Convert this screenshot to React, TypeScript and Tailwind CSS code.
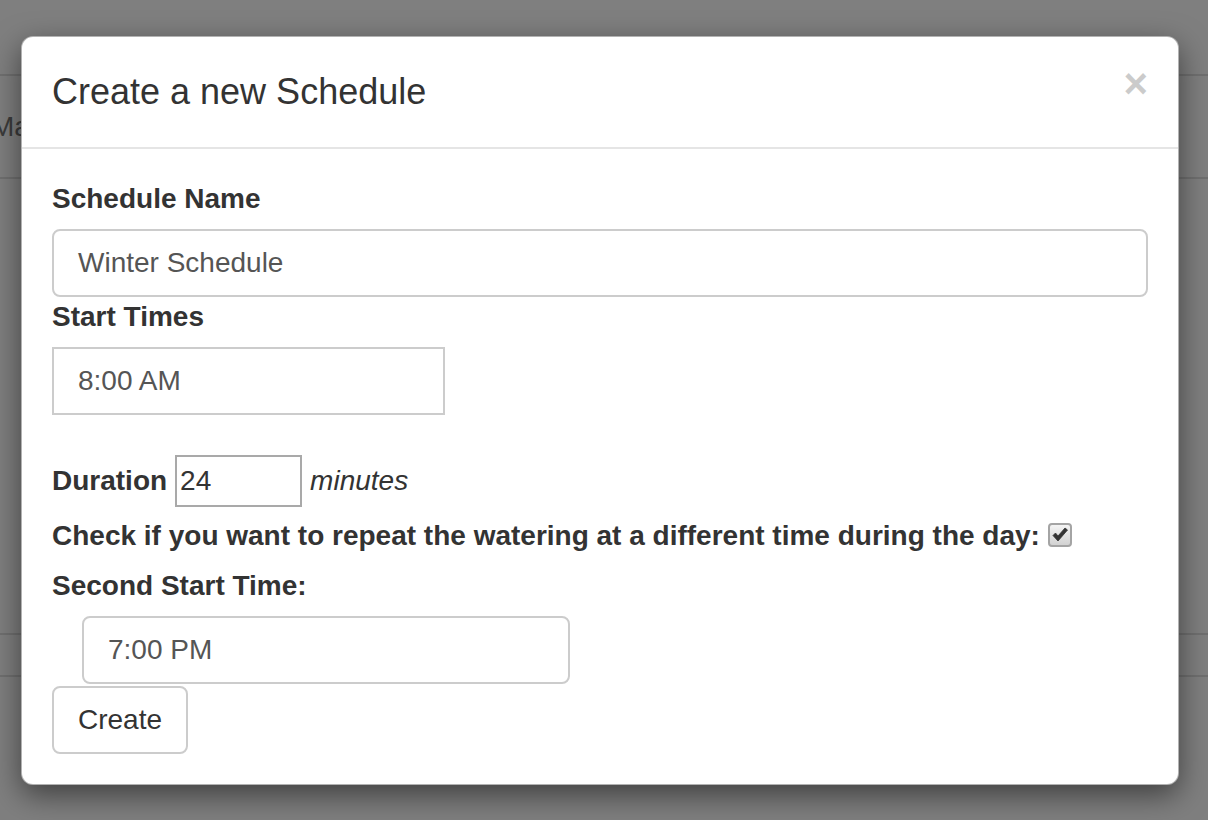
import React from "react";

export default function App() {
  return (
    <div className="relative h-[820px] w-full overflow-hidden bg-white font-['Liberation_Sans',Arial,sans-serif] text-[#333]">
      {/* page behind the backdrop */}
      <div className="flex flex-col">
        <div className="h-[76px] border-b-2 border-[#e0e0e0]" />
        <div className="flex h-[103px] items-center border-b-2 border-[#e0e0e0]">
          <span className="ml-[-9px] whitespace-nowrap text-[28px] leading-[40px] text-[#777]">Manage</span>
        </div>
        <div className="h-[456px] border-b-2 border-[#e0e0e0]" />
        <div className="h-[42px] border-b-2 border-[#e0e0e0]" />
      </div>

      {/* backdrop */}
      <div className="absolute inset-0 bg-black/50" />

      {/* modal */}
      <div className="absolute left-[21px] top-[36px] w-[1158px] rounded-[12px] border border-black/30 bg-white shadow-[0_10px_30px_rgba(0,0,0,0.5)]">
        <div className="flex items-start justify-between border-b-2 border-[#e5e5e5] px-[30px] pt-[30px] pb-[30px]">
          <h4 className="m-0 text-[36px] font-normal leading-[50px] text-[#333]">Create a new Schedule</h4>
          <button className="mt-[-4px] mr-[0px] text-[42px] font-bold leading-none text-black opacity-20">×</button>
        </div>
        <div className="flex flex-col items-start p-[30px] text-[28px] leading-[40px]">
          <label className="mb-[10px] font-bold">Schedule Name</label>
          <div className="flex h-[68px] w-full items-center rounded-[8px] border-2 border-[#ccc] px-[24px] text-[#555]">
            Winter Schedule
          </div>
          <label className="mb-[10px] font-bold">Start Times</label>
          <div className="flex h-[68px] w-[393px] items-center border-2 border-[#ccc] px-[24px] text-[#555]">
            8:00 AM
          </div>
          <div className="mt-[40px] flex h-[52px] items-center">
            <label className="font-bold">Duration</label>
            <div className="ml-[8px] flex h-[52px] w-[127px] items-center border-2 border-[#a9a9a9] pl-[3px] text-[#333]">
              24
            </div>
            <span className="ml-[8px] italic">minutes</span>
          </div>
          <div className="mt-[9px] mb-[10px] flex items-center">
            <label className="font-bold">
              Check if you want to repeat the watering at a different time during the day:
            </label>
            <div className="ml-[8px] mt-[-3px] flex h-[24px] w-[24px] items-center justify-center rounded-[4px] border-2 border-[#a4a4a4] bg-gradient-to-b from-[#f4f4f4] to-[#d2d2d2]">
              <svg width="16" height="15" viewBox="0 0 16 15">
                <path d="M1 8.5 L3.5 6 L6 9 L13 1 L15.5 3 L6 14 Z" fill="#333" stroke="#333" strokeWidth="0.8" strokeLinejoin="round" />
              </svg>
            </div>
          </div>
          <label className="mb-[10px] font-bold">Second Start Time:</label>
          <div className="ml-[30px] flex h-[68px] w-[488px] items-center rounded-[8px] border-2 border-[#ccc] px-[24px] text-[#555]">
            7:00 PM
          </div>
          <button className="mt-[2px] flex h-[68px] items-center rounded-[8px] border-2 border-[#ccc] bg-white px-[24px] text-[28px] text-[#333]">
            Create
          </button>
        </div>
      </div>
    </div>
  );
}
